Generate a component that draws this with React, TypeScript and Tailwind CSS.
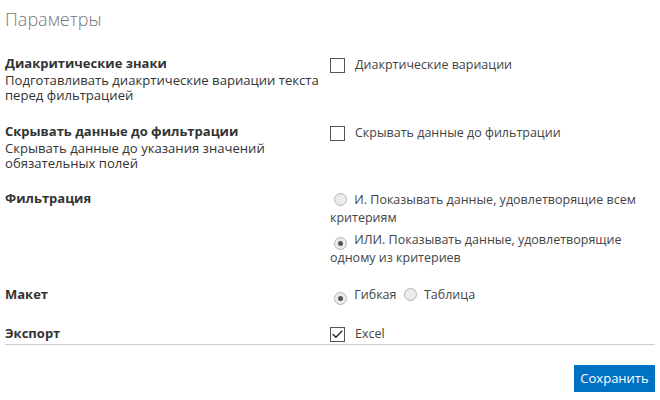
import { Check } from 'lucide-react';

const font = { fontFamily: '"Open Sans", "Noto Sans", sans-serif' };

function Checkbox({ checked }: { checked?: boolean }) {
  return (
    <span className="flex h-[15px] w-[15px] shrink-0 items-center justify-center border border-[#555] bg-white">
      {checked ? <Check className="h-[13px] w-[13px] text-[#222]" strokeWidth={2.5} /> : null}
    </span>
  );
}

function Radio({ checked }: { checked?: boolean }) {
  return (
    <span className="mx-[4px] inline-flex h-[13px] w-[13px] translate-y-[2px] items-center justify-center rounded-full border border-[#b5b5b5] bg-[#ececec] align-baseline">
      {checked ? <span className="h-[5px] w-[5px] rounded-full bg-[#555]" /> : null}
    </span>
  );
}

function Row({
  title,
  desc,
  className,
  children,
}: {
  title: string;
  desc?: string;
  className?: string;
  children: React.ReactNode;
}) {
  return (
    <div className={'grid grid-cols-[325px_1fr] ' + (className ?? '')}>
      <div>
        <div className="text-[13px] font-bold leading-[18px] text-[#333]">{title}</div>
        {desc ? <div className="mt-[1px] text-[13.1px] leading-[15px] text-[#333]">{desc}</div> : null}
      </div>
      <div className="text-[12.5px] leading-[20px] text-[#444]">{children}</div>
    </div>
  );
}

export default function App() {
  return (
    <div className="h-[400px] w-[660px] bg-white pl-[5px] pr-[5px]" style={font}>
      <h1 className="pt-[6px] text-[18px] font-light leading-[26px] text-[#777]">Параметры</h1>

      <div className="mt-[22px] flex flex-col">
        <Row title="Диакритические знаки" desc="Подготавливать диакртические вариации текста перед фильтрацией">
          <label className="flex items-center gap-[10px] pt-[1px]">
            <Checkbox />
            <span>Диакртические вариации</span>
          </label>
        </Row>

        <Row
          className="mt-[19px]"
          title="Скрывать данные до фильтрации"
          desc="Скрывать данные до указания значений обязательных полей"
        >
          <label className="flex items-center gap-[10px] pt-[1px]">
            <Checkbox />
            <span>Скрывать данные до фильтрации</span>
          </label>
        </Row>

        <Row className="mt-[18px]" title="Фильтрация">
          <div className="pt-[2px] leading-[18px]">
            <div>
              <Radio /> И. Показывать данные, удовлетворящие всем критериям
            </div>
            <div className="mt-[4px]">
              <Radio checked /> ИЛИ. Показывать данные, удовлетворящие одному из критериев
            </div>
          </div>
        </Row>

        <Row className="mt-[18px]" title="Макет">
          <div className="leading-[19px]">
            <Radio checked /> Гибкая <Radio /> Таблица
          </div>
        </Row>

        <Row className="mt-[20px]" title="Экспорт">
          <label className="flex items-center gap-[10px]">
            <Checkbox checked />
            <span>Excel</span>
          </label>
        </Row>
      </div>

      <div className="mt-[0px] w-[650px] border-t border-[#ccc]" />

      <div className="mt-[20px] flex w-[650px] justify-end">
        <button
          type="button"
          className="h-[27px] w-[81px] bg-[#0072c6] text-[13px] text-white"
        >
          Сохранить
        </button>
      </div>
    </div>
  );
}
